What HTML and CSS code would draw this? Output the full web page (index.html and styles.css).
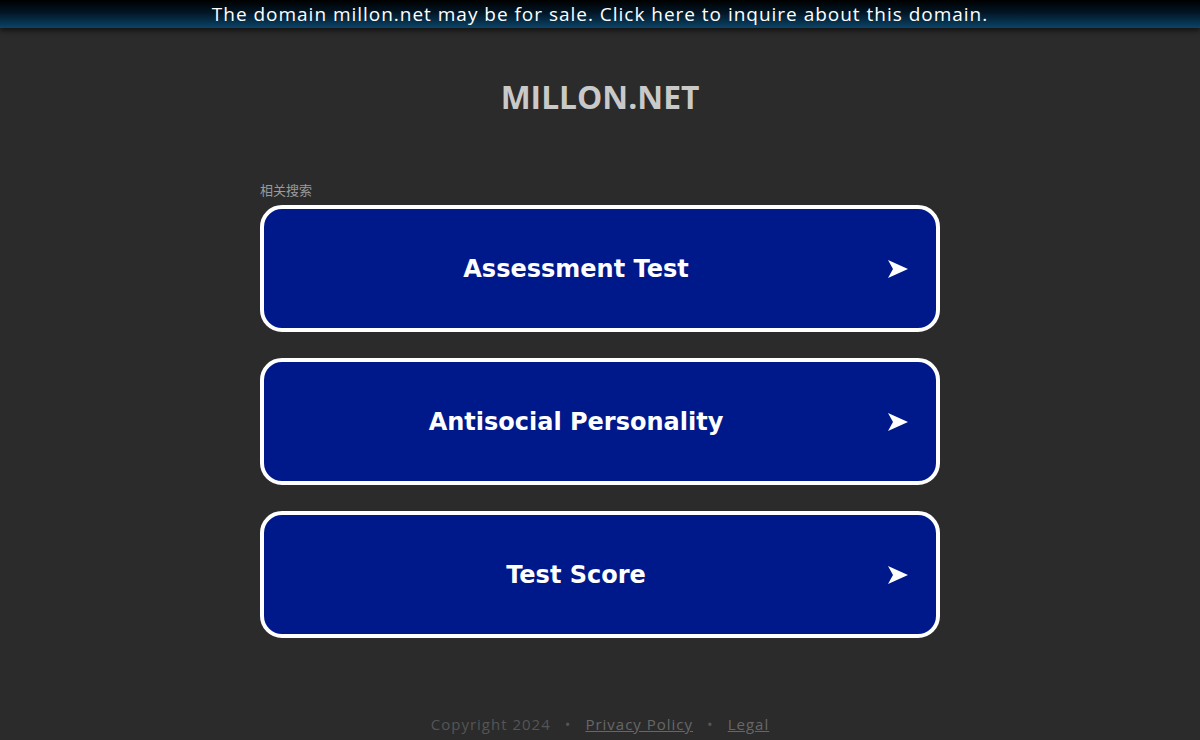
FILE: index.html
```html
<!DOCTYPE html>
<html>
<head>
<meta charset="utf-8">
<link rel="stylesheet" href="styles.css">
</head>
<body>
<div class="topbar"><a href="#">The domain millon.net may be for sale. Click here to inquire about this domain.</a></div>
<main class="main">
  <h1 class="title">MILLON.NET</h1>
  <div class="related">
    <div class="label">相关搜索</div>
    <a class="btn" href="#"><span class="btn-text">Assessment Test</span><svg class="arrow" viewBox="0 0 20 18"><path d="M0 0 L20 9 L0 18 L5 9 Z" fill="#fff"/></svg></a>
    <a class="btn" href="#"><span class="btn-text">Antisocial Personality</span><svg class="arrow" viewBox="0 0 20 18"><path d="M0 0 L20 9 L0 18 L5 9 Z" fill="#fff"/></svg></a>
    <a class="btn" href="#"><span class="btn-text">Test Score</span><svg class="arrow" viewBox="0 0 20 18"><path d="M0 0 L20 9 L0 18 L5 9 Z" fill="#fff"/></svg></a>
  </div>
</main>
<footer class="footer">
  <span>Copyright 2024</span><span class="dot">•</span><a href="#">Privacy Policy</a><span class="dot">•</span><a href="#">Legal</a>
</footer>
</body>
</html>
```
FILE: styles.css
```css
html, body {
  margin: 0;
  padding: 0;
  background: #2b2b2b;
  height: 740px;
  overflow: hidden;
}
body {
  font-family: "DejaVu Sans", Verdana, sans-serif;
  display: flex;
  flex-direction: column;
}
.topbar {
  height: 28px;
  background: linear-gradient(to bottom, #000000 0%, #021626 45%, #0b4367 100%);
  box-shadow: 0 3px 5px rgba(0,0,0,0.55);
  display: flex;
  align-items: center;
  justify-content: center;
  position: relative;
  z-index: 1;
}
.topbar a {
  color: #ffffff;
  text-decoration: none;
  font-family: "Open Sans", "DejaVu Sans", sans-serif;
  font-size: 19px;
  letter-spacing: 0.98px;
  line-height: 28px;
}
.main {
  display: flex;
  flex-direction: column;
  align-items: center;
}
.title {
  margin: 50px 0 0 0;
  font-family: "Open Sans", sans-serif;
  font-weight: 700;
  font-size: 31.8px;
  line-height: 38px;
  color: #c9c9c9;
}
.related {
  width: 680px;
  margin-top: 65px;
  display: flex;
  flex-direction: column;
}
.label {
  font-family: "Noto Sans CJK SC", sans-serif;
  font-size: 13px;
  line-height: 18px;
  color: #9a9a9a;
  margin-bottom: 6px;
}
.btn {
  height: 127px;
  box-sizing: border-box;
  border: 4px solid #ffffff;
  border-radius: 22px;
  background: #00198a;
  display: flex;
  align-items: center;
  text-decoration: none;
  margin-bottom: 26px;
  padding-right: 28px;
}
.btn-text {
  flex: 1;
  text-align: center;
  color: #ffffff;
  font-family: "DejaVu Sans", Verdana, sans-serif;
  font-weight: 700;
  font-size: 24px;
}
.arrow {
  width: 20px;
  height: 18px;
  display: block;
}
.footer {
  margin-top: auto;
  height: 26px;
  display: flex;
  justify-content: center;
  align-items: flex-start;
  font-family: "Open Sans", sans-serif;
  font-size: 15px;
  letter-spacing: 1px;
  color: #555555;
}
.footer a {
  color: #676767;
  text-decoration: underline;
}
.dot {
  margin: 0 14px;
  color: #555555;
}
```
